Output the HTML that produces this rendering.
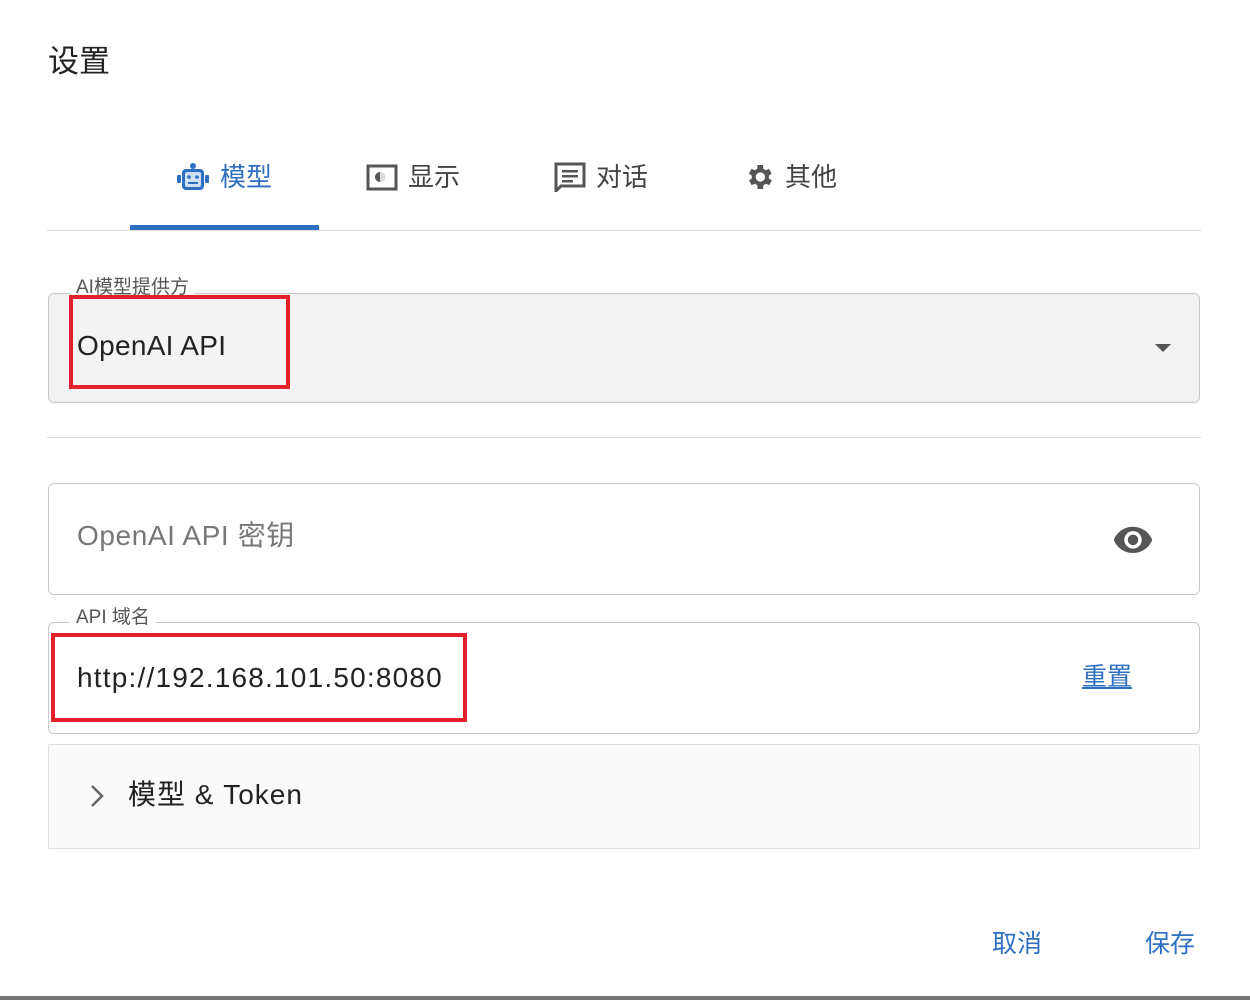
<!DOCTYPE html>
<html><head><meta charset="utf-8"><style>
body{margin:0;width:1250px;height:1000px;background:#fff;position:relative;overflow:hidden;font-family:"Liberation Sans","Noto Sans CJK SC",sans-serif;color:#222}
.a{position:absolute;white-space:nowrap}
.tab{position:absolute;top:160px;font-size:26px;color:#444;display:flex;align-items:center;gap:10px;line-height:34px}
.box{position:absolute;left:48px;width:1150px;border:1px solid #c8c8c8;border-radius:6px}
.lbl{position:absolute;font-size:19px;color:#555;background:#fff;padding:0 6px;line-height:20px}
.red{position:absolute;border:4px solid #e3202b}
</style></head><body>
<div class="a" style="left:48px;top:42px;font-size:31px;line-height:40px">设置</div>

<div class="tab" style="left:176px;color:#2f6fc2">
<svg width="34" height="30" viewBox="0 0 34 30"><circle cx="17" cy="4" r="3" fill="#2f6fc2"/><rect x="6" y="7" width="22" height="21" rx="4" fill="#2f6fc2"/><rect x="1" y="13" width="4" height="8" rx="1" fill="#2f6fc2"/><rect x="29" y="13" width="4" height="8" rx="1" fill="#2f6fc2"/><rect x="9" y="10" width="16" height="15" rx="2" fill="#cfe0f5"/><circle cx="13" cy="15" r="1.8" fill="#2f6fc2"/><circle cx="21" cy="15" r="1.8" fill="#2f6fc2"/><rect x="12" y="20" width="10" height="2" fill="#2f6fc2"/></svg>
<span>模型</span></div>
<div class="tab" style="left:366px">
<svg width="32" height="28" viewBox="0 0 32 28"><rect x="2" y="3" width="28" height="23" fill="none" stroke="#555" stroke-width="3"/><circle cx="14" cy="14" r="5" fill="#555"/><path d="M14 9a5 5 0 0 1 0 10z" fill="#ddd"/></svg>
<span>显示</span></div>
<div class="tab" style="left:554px">
<svg width="32" height="30" viewBox="0 0 32 30"><path d="M2 2h28v22H7l-5 5z" fill="none" stroke="#555" stroke-width="3"/><rect x="8" y="8" width="16" height="2.5" fill="#555"/><rect x="8" y="13" width="16" height="2.5" fill="#555"/><rect x="8" y="18" width="11" height="2.5" fill="#555"/></svg>
<span>对话</span></div>
<div class="tab" style="left:743px">
<svg width="32" height="32" viewBox="0 0 24 24"><path fill="#555" d="M19.4 13a7.5 7.5 0 0 0 0-2l2.1-1.6-2-3.5-2.5 1a7.6 7.6 0 0 0-1.7-1L15 3h-4l-.4 2.9a7.6 7.6 0 0 0-1.7 1l-2.5-1-2 3.5L6.6 11a7.5 7.5 0 0 0 0 2l-2.1 1.6 2 3.5 2.5-1a7.6 7.6 0 0 0 1.7 1L11 21h4l.4-2.9a7.6 7.6 0 0 0 1.7-1l2.5 1 2-3.5zM13 15.5a3.5 3.5 0 1 1 0-7 3.5 3.5 0 0 1 0 7z"/></svg>
<span>其他</span></div>
<div class="a" style="left:130px;top:225px;width:189px;height:5px;background:#2f6fc2"></div>
<div class="a" style="left:47px;top:230px;width:1154px;height:1px;background:#ddd"></div>

<div class="box" style="top:293px;height:108px;background:#f3f3f3"></div>
<div class="lbl" style="left:70px;top:278px;background:#fff">AI模型提供方</div>
<div class="a" style="left:77px;top:329px;font-size:28px;line-height:34px;letter-spacing:0.3px">OpenAI API</div>
<div class="a" style="left:1155px;top:344px;width:0;height:0;border-left:8px solid transparent;border-right:8px solid transparent;border-top:8px solid #555"></div>
<div class="red" style="left:69px;top:295px;width:213px;height:86px"></div>

<div class="a" style="left:47px;top:437px;width:1154px;height:1px;background:#ddd"></div>

<div class="box" style="top:483px;height:110px"></div>
<div class="a" style="left:77px;top:519px;font-size:28px;line-height:34px;color:#777;letter-spacing:0.6px">OpenAI API 密钥</div>
<svg class="a" style="left:1112px;top:525px" width="42" height="28" viewBox="0 0 24 16"><path d="M12 1C7 1 2.7 4.1 1 8.5 2.7 12.9 7 16 12 16s9.3-3.1 11-7.5C21.3 4.1 17 1 12 1zm0 12.5a5 5 0 1 1 0-10 5 5 0 0 1 0 10zm0-8a3 3 0 1 0 0 6 3 3 0 0 0 0-6z" fill="#555"/></svg>

<div class="box" style="top:622px;height:110px"></div>
<div class="lbl" style="left:70px;top:608px">API 域名</div>
<div class="a" style="left:77px;top:661px;font-size:28px;line-height:34px;letter-spacing:1.2px">http://192.168.101.50:8080</div>
<div class="a" style="left:1082px;top:662px;font-size:25px;line-height:30px;color:#2f6fc2;text-decoration:underline">重置</div>
<div class="red" style="left:51px;top:633px;width:408px;height:81px"></div>

<div class="box" style="top:744px;height:103px;background:#fafafa;border-color:#ddd;border-radius:2px"></div>
<svg class="a" style="left:89px;top:783px" width="16" height="26" viewBox="0 0 16 26"><path d="M3 3l10 10L3 23" fill="none" stroke="#666" stroke-width="2.5"/></svg>
<div class="a" style="left:128px;top:778px;font-size:28px;line-height:34px;letter-spacing:1px">模型 &amp; Token</div>

<div class="a" style="left:992px;top:929px;font-size:25px;line-height:30px;color:#2f6fc2">取消</div>
<div class="a" style="left:1145px;top:929px;font-size:25px;line-height:30px;color:#2f6fc2">保存</div>
<div class="a" style="left:0;top:996px;width:1250px;height:4px;background:#777"></div>
</body></html>
